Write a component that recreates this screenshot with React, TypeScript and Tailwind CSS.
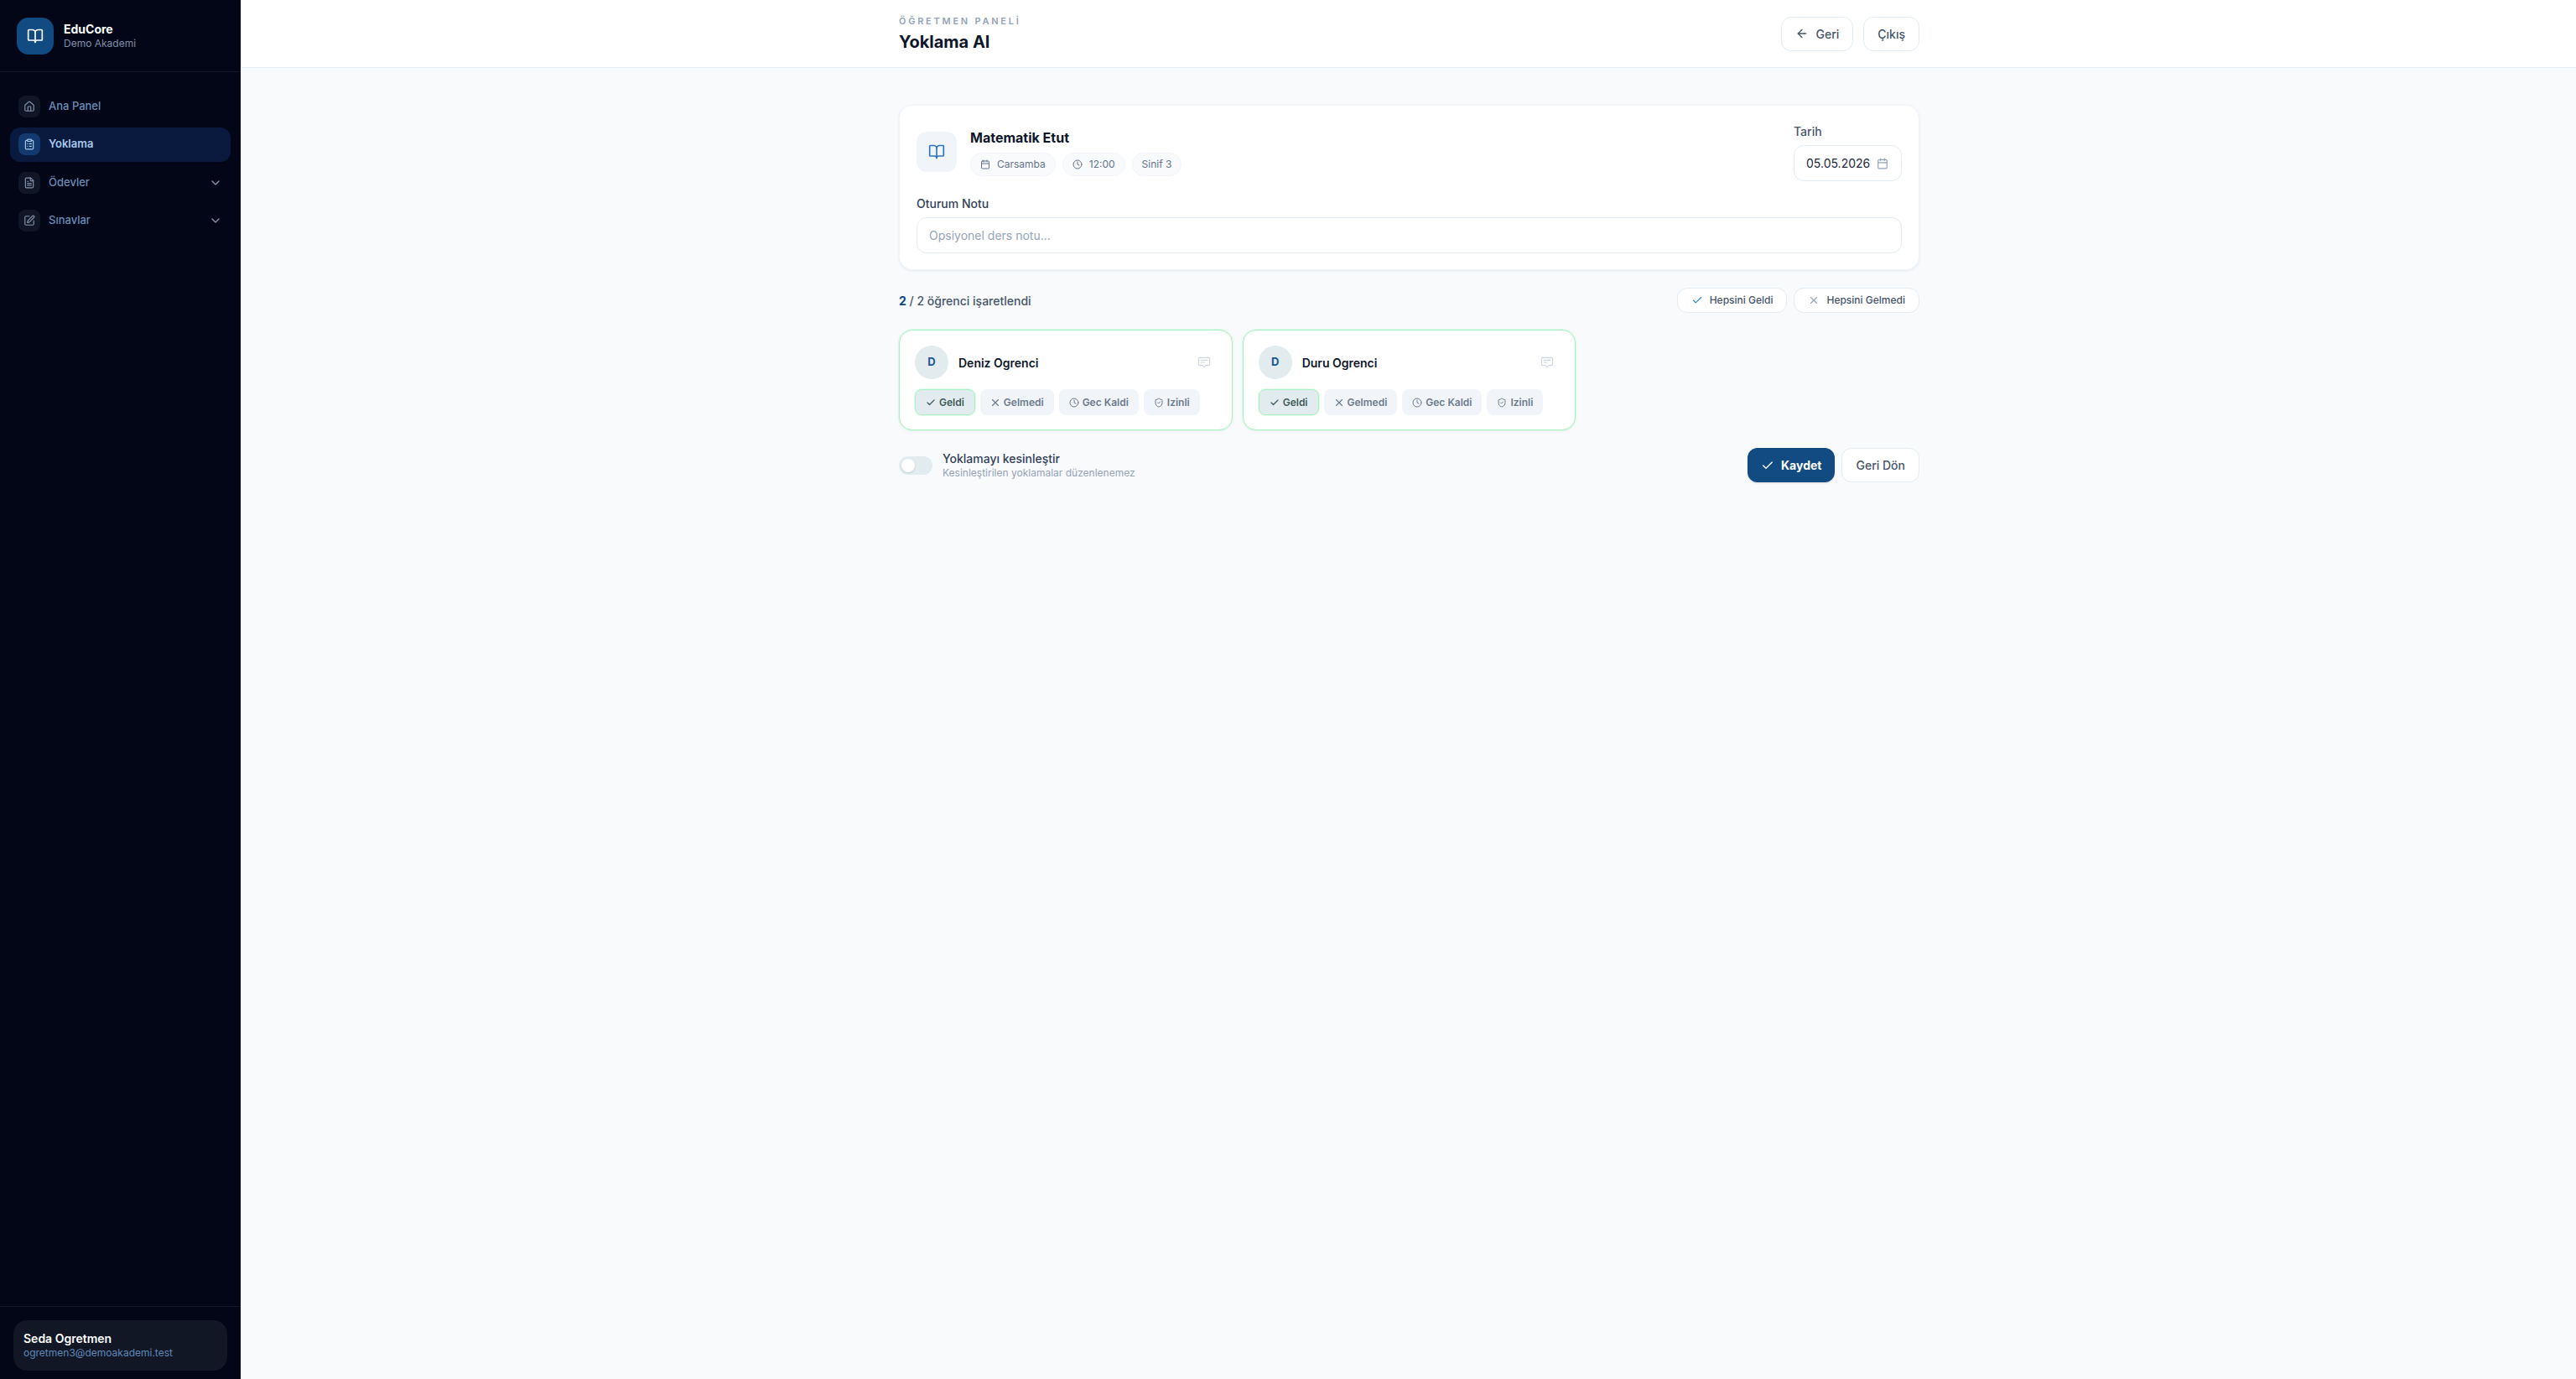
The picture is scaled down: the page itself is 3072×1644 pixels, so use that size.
import { ArrowLeft, BookOpen, Calendar, Check, ChevronDown, ClipboardList, Clock, FileText, House, ShieldCheck, SquarePen, X } from "lucide-react"

const navItems = [
  { label: "Ana Panel", icon: House },
  { label: "Yoklama", icon: ClipboardList, active: true },
  { label: "Ödevler", icon: FileText, chevron: true },
  { label: "Sınavlar", icon: SquarePen, chevron: true },
]

const students = ["Deniz Ogrenci", "Duru Ogrenci"]

function NoteIcon({ className }: { className?: string }) {
  return (
    <svg viewBox="0 0 24 24" fill="none" stroke="currentColor" strokeWidth={1.7} strokeLinecap="round" strokeLinejoin="round" className={className}>
      <path d="M4 3.5h16a2 2 0 0 1 2 2v10a2 2 0 0 1-2 2h-5l-3 3-3-3H4a2 2 0 0 1-2-2v-10a2 2 0 0 1 2-2z" />
      <path d="M6.5 8h11M6.5 12h6" />
    </svg>
  )
}

function Sidebar() {
  return (
    <aside className="flex h-full w-[288px] shrink-0 flex-col border-r border-[#f8fafc] bg-[#020617]">
      <div className="flex h-[86px] items-center gap-3 border-b border-[#12192b] px-5">
        <div className="flex h-11 w-11 items-center justify-center rounded-[14px] bg-[#124a82]">
          <BookOpen className="h-5 w-5 text-white" strokeWidth={2} />
        </div>
        <div>
          <div className="text-[14px] leading-[18px] font-bold text-white">EduCore</div>
          <div className="text-[12px] leading-[16px] text-[#7d90a8]">Demo Akademi</div>
        </div>
      </div>
      <nav className="flex flex-1 flex-col gap-[4.5px] px-3 py-[20px]">
        {navItems.map((item) => (
          <div
            key={item.label}
            className={`flex h-[41px] items-center gap-2.5 rounded-xl px-2.5 ${item.active ? "bg-[#0a1a3f]" : ""}`}
          >
            <div className={`flex h-[26px] w-[26px] items-center justify-center rounded-lg ${item.active ? "bg-[#123a6e]" : "bg-[#101626]"}`}>
              <item.icon className={`h-3.5 w-3.5 ${item.active ? "text-[#a9c8ea]" : "text-[#8292a8]"}`} />
            </div>
            <span className={`flex-1 text-[13px] ${item.active ? "font-semibold text-[#a9c8ea]" : "font-medium text-[#6a8db8]"}`}>{item.label}</span>
            {item.chevron && <ChevronDown className="h-4 w-4 text-[#8292a8]" />}
          </div>
        ))}
      </nav>
      <div className="border-t border-[#12192b] px-4 pt-4 pb-[10px]">
        <div className="flex h-[60px] flex-col justify-center rounded-2xl bg-[#121726] px-3">
          <div className="text-[14px] leading-[18px] font-semibold text-white">Seda Ogretmen</div>
          <div className="text-[12px] leading-[16px] text-[#5f88b8]">ogretmen3@demoakademi.test</div>
        </div>
      </div>
    </aside>
  )
}

function StudentCard({ name }: { name: string }) {
  return (
    <div className="h-[120px] rounded-2xl border border-[#a9f0c4] bg-white px-[18px] pt-[18px] shadow-[0_0_0_1px_rgba(187,247,208,0.4),0_2px_4px_rgba(148,163,184,0.08)]">
      <div className="flex items-center gap-3">
        <div className="flex h-10 w-10 items-center justify-center rounded-full bg-[#e2ecef] text-[13px] font-bold text-[#1d5596]">D</div>
        <div className="flex-1 text-[14px] font-semibold text-[#0f172a]">{name}</div>
        <NoteIcon className="mr-[7px] h-4 w-4 text-[#cbd5e1]" />
      </div>
      <div className="mt-3 flex gap-1.5">
        <button className="flex h-[31px] items-center gap-1 rounded-lg border border-[#a9f0c4] bg-[#e2ecef] px-3 text-[12px] font-semibold text-[#3f5a5a] shadow-[0_0_0_1px_rgba(187,247,208,0.4)]">
          <Check className="h-3 w-3" strokeWidth={2.5} />
          Geldi
        </button>
        <button className="flex h-[31px] items-center gap-1 rounded-lg bg-[#f1f5f9] px-3 text-[12px] font-semibold text-[#6b7a8d]">
          <X className="-mx-px h-3.5 w-3.5" />
          Gelmedi
        </button>
        <button className="flex h-[31px] items-center gap-1 rounded-lg bg-[#f1f5f9] px-3 text-[12px] font-semibold text-[#6b7a8d]">
          <Clock className="h-3 w-3" />
          Gec Kaldi
        </button>
        <button className="flex h-[31px] items-center gap-1 rounded-lg bg-[#f1f5f9] px-3 text-[12px] font-semibold text-[#6b7a8d]">
          <ShieldCheck className="h-3 w-3" />
          Izinli
        </button>
      </div>
    </div>
  )
}

export default function App() {
  return (
    <div className="flex h-screen overflow-hidden bg-[#f8fafc] font-['Inter',sans-serif]">
      <Sidebar />
      <main className="flex min-w-0 flex-1 flex-col">
        <header className="h-[81px] border-b border-[#e2ecf2] bg-white">
          <div className="ml-[784px] flex h-full w-[1217px] items-center justify-between">
            <div>
              <div className="text-[11px] leading-[16px] font-semibold tracking-[0.25em] text-[#94a3b8]">ÖĞRETMEN PANELİ</div>
              <h1 className="mt-[3px] text-[20px] leading-[28px] font-bold text-[#0f172a]">Yoklama AI</h1>
            </div>
            <div className="flex gap-3">
              <button className="flex h-[41px] items-center gap-2 rounded-xl border border-[#e2ecf2] bg-white px-4 text-[14px] font-medium text-[#475569]">
                <ArrowLeft className="h-4 w-4" />
                Geri
              </button>
              <button className="h-[41px] rounded-xl border border-[#e2ecf2] bg-white px-4 text-[14px] font-medium text-[#475569]">Çıkış</button>
            </div>
          </div>
        </header>

        <div className="ml-[784px] w-[1217px] pt-[44px]">
          <section className="h-[197px] rounded-2xl border border-[#f1f5f9] bg-white px-5 pt-[21px] shadow-[0_1px_3px_rgba(148,163,184,0.18)]">
            <div className="flex justify-between">
              <div className="flex items-center gap-4 self-start pt-[5px]">
                <div className="flex h-12 w-12 items-center justify-center rounded-xl bg-[#f1f5f9]">
                  <BookOpen className="h-5 w-5 text-[#2f74c0]" />
                </div>
                <div>
                  <div className="text-[16px] leading-[24px] font-bold text-[#0f172a]">Matematik Etut</div>
                  <div className="mt-[6px] flex gap-2">
                    <span className="flex h-7 items-center gap-2 rounded-full border border-[#f1f5f9] bg-[#f8fafc] px-[11px] text-[12px] text-[#64748b]">
                      <Calendar className="h-3 w-3" />
                      Carsamba
                    </span>
                    <span className="flex h-7 items-center gap-2 rounded-full border border-[#f1f5f9] bg-[#f8fafc] px-[11px] text-[12px] text-[#64748b]">
                      <Clock className="h-3 w-3" />
                      12:00
                    </span>
                    <span className="flex h-7 items-center rounded-full border border-[#f1f5f9] bg-[#f8fafc] px-[11px] text-[12px] text-[#64748b]">Sinif 3</span>
                  </div>
                </div>
              </div>
              <div className="w-[129px]">
                <label className="block text-[14px] leading-[20px] font-medium text-[#475569]">Tarih</label>
                <div className="mt-[6px] flex h-[43px] items-center justify-between rounded-xl border border-[#e2ecf2] bg-white pr-[15px] pl-[14px] text-[14px] text-[#1e293b]">
                  05.05.2026
                  <Calendar className="h-[14px] w-[14px] text-[#94a3b8]" />
                </div>
              </div>
            </div>
            <label className="mt-[17px] block text-[14px] leading-[20px] font-medium text-[#334155]">Oturum Notu</label>
            <input
              className="mt-[6px] h-[43px] w-full rounded-xl border border-[#e2ecf2] bg-white px-[14px] text-[14px] outline-none placeholder:text-[#94a3b8]"
              placeholder="Opsiyonel ders notu..."
            />
          </section>

          <div className="mt-[21px] flex h-[30px] items-center justify-between">
            <div className="text-[14px] font-medium text-[#475569]">
              <span className="font-bold text-[#124a82]">2</span> / 2 öğrenci işaretlendi
            </div>
            <div className="flex gap-2">
              <button className="flex h-[30px] items-center gap-2 rounded-xl border border-[#e2ecf2] bg-white px-4 text-[12px] font-medium text-[#475569]">
                <Check className="h-3.5 w-3.5 text-[#2f86c8]" />
                Hepsini Geldi
              </button>
              <button className="flex h-[30px] items-center gap-2 rounded-xl border border-[#e2ecf2] bg-white px-4 text-[12px] font-medium text-[#475569]">
                <X className="h-3.5 w-3.5 text-[#94a3b8]" />
                Hepsini Gelmedi
              </button>
            </div>
          </div>

          <div className="mt-[20px] grid grid-cols-3 gap-3">
            {students.map((s) => (
              <StudentCard key={s} name={s} />
            ))}
          </div>

          <div className="mt-[21px] flex items-center justify-between">
            <div className="flex items-center gap-3">
              <div className="flex h-[22px] w-10 items-center rounded-full bg-[#e2ecef] px-[3px]">
                <div className="h-4 w-4 rounded-full bg-white shadow-sm" />
              </div>
              <div>
                <div className="text-[14px] leading-[18px] font-medium text-[#334155]">Yoklamayı kesinleştir</div>
                <div className="text-[12px] leading-[16px] text-[#94a3b8]">Kesinleştirilen yoklamalar düzenlenemez</div>
              </div>
            </div>
            <div className="flex gap-2">
              <button className="flex h-[41px] items-center gap-2 rounded-xl bg-[#124a82] px-4 text-[14px] font-bold text-white shadow-sm">
                <Check className="h-4 w-4" />
                Kaydet
              </button>
              <button className="h-[41px] rounded-xl border border-[#e2ecf2] bg-white px-4 text-[14px] font-medium text-[#475569]">Geri Dön</button>
            </div>
          </div>
        </div>
      </main>
    </div>
  )
}
